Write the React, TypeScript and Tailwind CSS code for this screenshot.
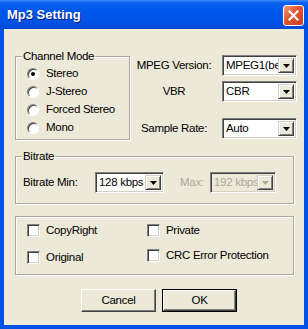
const font = { fontFamily: '"Liberation Sans", Arial, sans-serif' };

function Combo({ value, width, disabled }: { value: string; width: number; disabled?: boolean }) {
  return (
    <div
      className={`flex h-[21px] items-center border border-t-[#808080] border-l-[#808080] border-b-white border-r-white shadow-[inset_1px_1px_0_#404040,inset_-1px_-1px_0_#D4D0C8] p-[2px] ${
        disabled ? "bg-[#ECE9D8] text-[#ACA899]" : "bg-white text-black"
      }`}
      style={{ width }}
    >
      <div className="flex-1 overflow-hidden whitespace-nowrap pl-[1px] text-[11.5px] leading-none tracking-[-0.3px]">{value}</div>
      <div className="flex h-[15px] w-[16px] shrink-0 items-center justify-center border border-t-[#D4D0C8] border-l-[#D4D0C8] border-b-[#404040] border-r-[#404040] bg-[#ECE9D8] shadow-[inset_1px_1px_0_white,inset_-1px_-1px_0_#808080]">
        <svg width="7" height="4" viewBox="0 0 7 4">
          <path d="M0 0h7L3.5 4z" fill={disabled ? "#ACA899" : "#000"} />
        </svg>
      </div>
    </div>
  );
}

function Radio({ label, checked }: { label: string; checked?: boolean }) {
  return (
    <div className="flex h-[18px] items-center gap-[7px]">
      <div className="flex h-[12px] w-[12px] items-center justify-center rounded-full border border-t-[#808080] border-l-[#808080] border-b-white border-r-white bg-white shadow-[inset_1px_1px_0_#404040]">
        {checked && <div className="h-[4px] w-[4px] rounded-full bg-black" />}
      </div>
      <span>{label}</span>
    </div>
  );
}

function Check({ label }: { label: string }) {
  return (
    <div className="flex h-[13px] items-center gap-[6px]">
      <div className="h-[13px] w-[13px] border border-t-[#808080] border-l-[#808080] border-b-white border-r-white bg-white shadow-[inset_1px_1px_0_#404040,inset_-1px_-1px_0_#D4D0C8]" />
      <span>{label}</span>
    </div>
  );
}

function Group({ title, className, children }: { title?: string; className: string; children: React.ReactNode }) {
  return (
    <div className={`relative border border-[#ACA899] shadow-[inset_1px_1px_0_white,1px_1px_0_white] ${className}`}>
      {title && (
        <span className="absolute left-[6px] top-[-7px] bg-[#ECE9D8] px-[1px] leading-[13px]">{title}</span>
      )}
      {children}
    </div>
  );
}

function Button({ label, def }: { label: string; def?: boolean }) {
  return (
    <div className={`h-[23px] w-[75px] ${def ? "border border-black" : ""}`}>
      <div className="flex h-full w-full items-center justify-center border border-t-white border-l-white border-b-[#404040] border-r-[#404040] bg-[#ECE9D8] shadow-[inset_-1px_-1px_0_#808080]">
        {label}
      </div>
    </div>
  );
}

export default function App() {
  return (
    <div className="flex h-[329px] w-[308px] flex-col bg-[#0053E6] text-[11.5px] tracking-[-0.3px] text-black" style={font}>
      <div className="flex h-[29px] shrink-0 items-center justify-between bg-[linear-gradient(#3A8CF8_0px,#0A5DF0_3px,#0058EE_10px,#0054E6_20px,#0049D8_29px)] pl-[7px] pr-[4px]">
        <span className="text-[13px] font-bold tracking-normal text-white [text-shadow:1px_1px_0_#0A1E80]">Mp3 Setting</span>
        <div className="mt-[2px] flex h-[21px] w-[21px] items-center justify-center rounded-[3px] border border-white bg-[linear-gradient(135deg,#F39A7D,#E0552F_45%,#C8401F)]">
          <svg width="11" height="11" viewBox="0 0 11 11">
            <path d="M1.5 1.5l8 8M9.5 1.5l-8 8" stroke="white" strokeWidth="2.2" strokeLinecap="square" />
          </svg>
        </div>
      </div>
      <div className="mx-[4px] mb-[4px] flex flex-1 flex-col bg-[#ECE9D8]">
        <div className="mt-[26px] flex">
          <Group title="Channel Mode" className="ml-[11px] mt-[1px] h-[84px] w-[115px] pl-[11px] pt-[8px]">
            <Radio label="Stereo" checked />
            <Radio label="J-Stereo" />
            <Radio label="Forced Stereo" />
            <Radio label="Mono" />
          </Group>
          <div className="ml-[5px] flex flex-col">
            <div className="flex h-[21px] items-center">
              <span className="w-[78px] whitespace-nowrap text-center">MPEG Version:</span>
              <div className="ml-[9px]"><Combo value="MPEG1(best)" width={75} /></div>
            </div>
            <div className="mt-[5px] flex h-[21px] items-center">
              <span className="w-[78px] whitespace-nowrap text-center">VBR</span>
              <div className="ml-[9px]"><Combo value="CBR" width={75} /></div>
            </div>
            <div className="mt-[16px] flex h-[21px] items-center">
              <span className="w-[78px] whitespace-nowrap text-center">Sample Rate:</span>
              <div className="ml-[9px]"><Combo value="Auto" width={75} /></div>
            </div>
          </div>
        </div>
        <Group title="Bitrate" className="ml-[11px] mt-[16px] flex h-[48px] w-[279px] items-start pl-[7px] pt-[15px]">
          <span className="flex h-[21px] w-[72px] items-center whitespace-nowrap">Bitrate Min:</span>
          <Combo value="128 kbps" width={69} />
          <span className="ml-[16px] flex h-[21px] w-[30px] items-center text-[#ACA899]">Max:</span>
          <Combo value="192 kbps" width={66} disabled />
        </Group>
        <Group className="ml-[11px] mt-[12px] flex h-[59px] w-[279px] pl-[11px] pt-[7px]">
          <div className="flex w-[120px] flex-col gap-[14px]">
            <Check label="CopyRight" />
            <Check label="Original" />
          </div>
          <div className="flex flex-col gap-[12px]">
            <Check label="Private" />
            <Check label="CRC Error Protection" />
          </div>
        </Group>
        <div className="mt-[14px] flex gap-[6px] pl-[77px]">
          <Button label="Cancel" />
          <Button label="OK" def />
        </div>
      </div>
    </div>
  );
}
